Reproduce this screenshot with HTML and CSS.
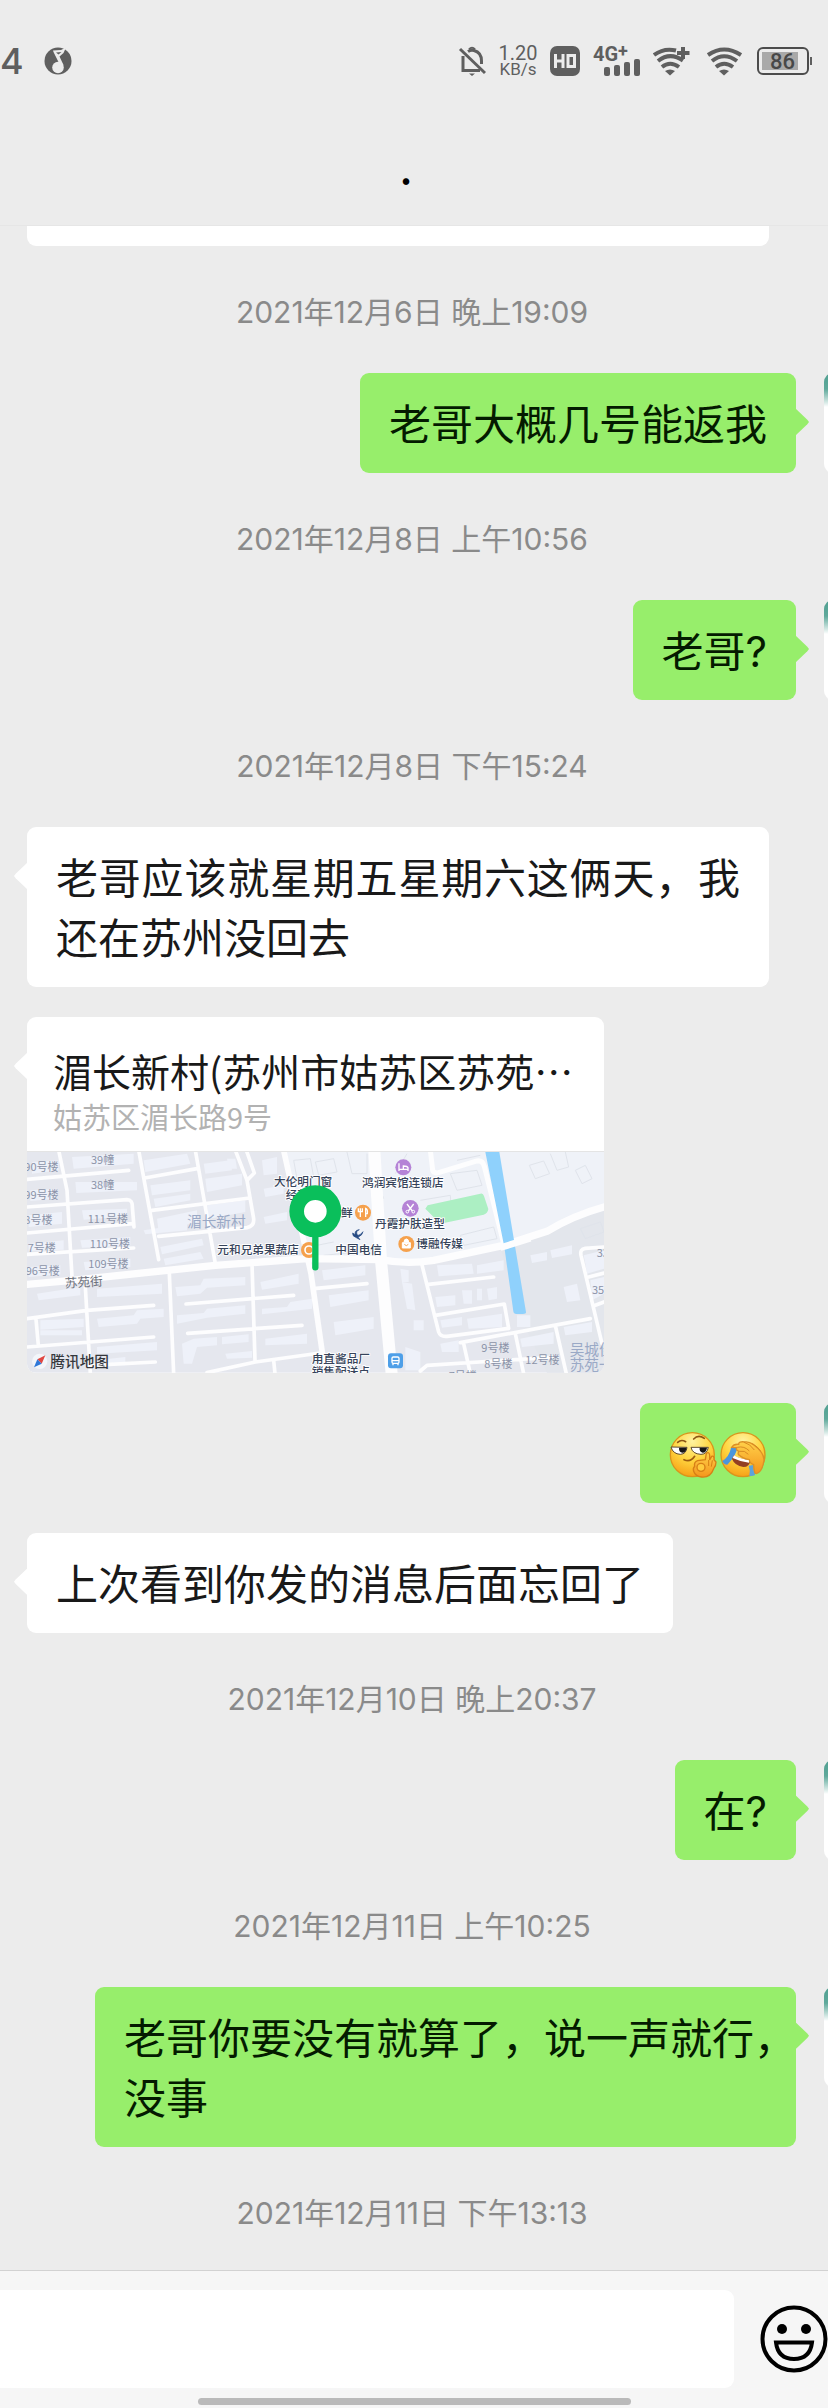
FILE: index.html
```html
<!DOCTYPE html>
<html lang="zh-CN">
<head>
    <meta charset="UTF-8">
    <meta name="viewport" content="width=device-width, initial-scale=1.0">
    <title>聊天</title>
    <link rel="stylesheet" href="styles.css">
</head>
<body>
    <header class="top">
        <div class="status">
            <span class="clock">4</span>
            <svg class="music" width="28" height="28" viewBox="0 0 28 28">
                <circle cx="14" cy="14" r="13.500" fill="#5f5f5f"/>
                <circle cx="14" cy="20.500" r="5.800" fill="#ececec"/>
                <path d="M9 3.500L17 3L22 0.500L19.500 6L15.500 9.500L19.500 18L17 20L9.500 5Z" fill="#ececec"/>
                <path d="M12 5.500L17.500 5L14.500 7.500Z" fill="#5f5f5f"/>
            </svg>
            <div class="indicators">
                <svg width="28" height="30" viewBox="0 0 28 30" fill="none" stroke="#5f5f5f" stroke-width="3">
                    <path d="M2 3L27 27"/>
                    <path d="M5 10V24.500H22"/>
                    <path d="M10 5.500Q13 3.500 16 4.500Q23.500 6.500 23.500 15V18"/>
                    <path d="M11 3.500Q14 0 17 3.500" stroke-width="2"/>
                    <path d="M11 27.500H17L14 30Z" fill="#5f5f5f" stroke="none"/>
                </svg>
                <span class="speed"><span class="speed-value">1.20</span><span class="speed-unit">KB/s</span></span>
                <svg width="30" height="30" viewBox="0 0 30 30">
                    <rect width="30" height="30" rx="7" fill="#5f5f5f"/>
                    <path d="M5.500 8V22M13 8V22M5.500 15H13" fill="none" stroke="#ececec" stroke-width="3"/>
                    <path d="M18 9.500H24.500V20.500H18Z" fill="none" stroke="#ececec" stroke-width="3"/>
                </svg>
                <span class="signal">
                    <span class="network">4G<sup>+</sup></span>
                    <svg width="36" height="17" viewBox="0 0 36 17" fill="#5f5f5f">
                        <rect x="0" y="8" width="6" height="9" rx="2"/>
                        <rect x="10" y="6" width="6" height="11" rx="2"/>
                        <rect x="20" y="3" width="6" height="14" rx="2"/>
                        <rect x="30" y="0" width="6" height="17" rx="2"/>
                    </svg>
                </span>
                <svg width="40" height="30" viewBox="0 0 40 30" fill="none" stroke="#5f5f5f" stroke-width="4">
                    <path d="M1 9Q11 1.500 23 4.500"/>
                    <path d="M5 15Q17 5.500 30 14.500"/>
                    <path d="M9 21Q17 14.500 26 21"/>
                    <path d="M12 25Q17 22 22 25L17 29.500Z" fill="#5f5f5f" stroke="none"/>
                    <path d="M30 1V13M24 7H36.500"/>
                </svg>
                <svg width="38" height="30" viewBox="0 0 38 30" fill="none" stroke="#5f5f5f" stroke-width="4">
                    <path d="M2 9Q18 -2 35 9"/>
                    <path d="M6 15Q18 5.500 31 15"/>
                    <path d="M10 21Q18 14.500 27 21"/>
                    <path d="M13 25Q18 22 23 25L18 29.500Z" fill="#5f5f5f" stroke="none"/>
                </svg>
                <span class="battery"><span class="battery-level">86</span></span>
            </div>
        </div>
        <h1 class="title">.</h1>
    </header>

    <main class="chat">
        <div class="row"><div class="bubble cut"></div></div>

        <time class="stamp">2021年12月6日 晚上19:09</time>
        <div class="row me">
            <p class="bubble">老哥大概几号能返我</p>
            <span class="avatar"></span>
        </div>

        <time class="stamp">2021年12月8日 上午10:56</time>
        <div class="row me">
            <p class="bubble">老哥?</p>
            <span class="avatar"></span>
        </div>

        <time class="stamp">2021年12月8日 下午15:24</time>
        <div class="row">
            <p class="bubble">老哥应该就星期五星期六这俩天，我还在苏州没回去</p>
        </div>

        <div class="row">
            <a class="bubble place" href="#">
                <span class="place-name">湄长新村(苏州市姑苏区苏苑…</span>
                <span class="place-address">姑苏区湄长路9号</span>
                <svg class="map" viewBox="80 65 1731 662">
                    <rect x="80" y="65" width="1731" height="662" fill="#e5e7ee"/>
                    <path d="M850 65H1811V230L1510 345L1240 395L1140 390L920 385Z" fill="#eff2f8"/>
                    <path d="M1500 350L1811 240V727H1640L1560 560Z" fill="#e3e6ec"/>

                    <!-- buildings -->
                    <g fill="#eef1f9">
                        <path d="M215 80L400 70V100L220 115ZM225 155L410 155V180L228 188ZM245 240L380 235V258L250 268ZM240 330L390 320V345L245 352ZM250 395L390 385V410L255 420Z"/>
                        <path d="M95 95L175 90V120L95 130ZM90 180L170 175V205L90 212ZM85 255L185 245V280L85 290ZM85 340L190 330V358L85 362ZM85 410L180 405V432L85 440Z"/>
                        <path d="M430 90L560 70L570 100L435 125ZM450 165L570 150V180L455 195ZM460 205L570 190V210L465 230ZM470 265L590 240V275L475 305ZM480 350L605 325L610 345L485 372ZM490 385L600 365L610 385L495 405Z"/>
                        <path d="M610 100L690 90L695 120L615 130ZM615 145L725 130V165L620 185ZM620 225L735 210V245L625 265ZM680 85H705L710 115H685ZM785 90L830 80V130L790 135ZM790 175L850 165V190L795 200ZM790 260L860 245V270L795 280ZM430 300L560 280V300L435 312Z"/>
                        <path d="M110 490L240 470V495L115 510ZM290 475L485 460V490L290 500ZM120 570L250 565V590L120 598ZM290 565L400 555L410 540L490 535V560L420 565L410 580L295 590ZM120 600H245V615H120ZM290 650L470 635V660L290 670ZM290 690L375 680V705H290Z"/>
                        <path d="M525 470L600 465L610 445L735 440V465L620 472L600 490L530 498ZM530 555L610 548L620 535L735 525V550L620 562L530 580ZM545 640L580 625L650 620V645L590 650L575 700H550ZM665 620L745 612V635L665 642ZM675 670L755 662V682L680 685Z"/>
                        <path d="M780 455L895 430V460L785 478ZM785 535L860 530L870 515L935 505V535L785 552ZM795 625L920 610V640L795 645ZM965 420L1095 405V435L970 450ZM985 495L1105 480V510L990 530ZM1000 575L1120 560V595L1005 615Z"/>
                        <path d="M1310 405L1415 400L1420 430L1315 438ZM1430 405L1510 390V420L1430 430ZM1305 500L1365 495V525L1310 530ZM1385 480H1415V520H1390ZM1430 475H1445V510H1430ZM1460 475L1490 470V505L1465 510ZM1320 570L1385 560V585L1325 592ZM1400 565L1505 550V590L1405 595ZM1320 640L1375 630V665H1325Z"/>
                        <path d="M1590 375L1640 365V390L1595 398ZM1650 360L1715 345V372L1655 383ZM1690 470L1730 460L1740 510L1700 515ZM1750 375L1811 360V390L1755 400ZM1755 400L1811 385V415L1760 430ZM1770 450L1811 440V490L1775 510ZM1560 625L1660 605V640L1565 650ZM1690 590L1775 575V605L1695 615ZM1550 555H1590V590H1550Z"/>
                        <path d="M1200 415L1225 420V455H1205ZM1205 455L1235 460L1245 540L1220 535ZM1240 570H1270V600H1240ZM1215 650L1260 665V720H1215Z"/>
                    </g>
                    <g fill="none" stroke="#dfe3ea" stroke-width="3">
                        <path d="M880 90L930 85L940 140L890 145ZM945 95L1000 85L1010 125L955 135ZM1040 65L1055 130H1100V70M1130 150L1150 205M1185 130L1220 70M1350 130L1430 120L1445 165L1370 180ZM1370 90L1440 75M1260 210L1350 195L1355 265M1380 315L1480 290L1490 325L1390 345ZM950 345L1000 335M970 375L1120 360"/>
                        <path d="M1587 105L1630 92L1648 130L1605 145ZM1650 70L1670 120L1705 110L1695 65M1725 120L1755 105L1775 145L1745 160ZM1740 295L1800 275L1811 305L1755 325Z"/>
                    </g>

                    <path d="M1275 235L1282 225L1440 190Q1448 187 1451 197L1464 236Q1463 248 1450 253L1320 280Z" fill="#acefc3"/>

                    <!-- streets -->
                    <g fill="none" stroke="#fdfdfe" stroke-width="11" stroke-linecap="round" stroke-linejoin="round">
                        <path d="M175 60L200 180L215 440M415 60L475 388M585 60L645 400M705 60L740 150L760 265Q762 288 740 292L475 318M738 60L762 128L740 150"/>
                        <path d="M80 147L385 120M80 230L380 208Q397 208 396 230L401 290M80 308L398 280M80 372L400 353M433 143L590 115M455 240L748 203"/>
                        <path d="M80 565L260 540L460 525M255 470L270 730M107 567L114 645M80 650L460 620M507 430L520 730M755 400L764 690M557 521L880 495M562 609L905 585M270 705L465 695M820 690L824 730"/>
                        <path d="M620 727L765 695L960 668M940 475L1100 460M1264 400L1315 605Q1320 620 1340 618L1525 594L1512 521L1305 555M1285 462L1480 440"/>
                        <path d="M1380 637L1770 565M1390 640L1410 730M1545 610L1570 730M1666 590L1698 730M1260 722L1280 705L1670 680M1811 350L1755 354Q1738 356 1742 375L1805 640M1765 440L1811 428M1785 525L1811 515"/>
                        <path d="M1290 60L1297 120Q1300 130 1315 127L1425 93Q1446 87 1452 108L1510 340" stroke-width="15"/>
                        <path d="M850 60L932 430L975 730" stroke-width="17"/>
                        <path d="M80 462L215 450L645 405L920 385L1140 388Q1220 403 1300 390L1510 345L1640 303Q1720 255 1811 230" stroke-width="22"/>
                        <path d="M1122 60L1142 390L1174 730" stroke-width="36"/>
                    </g>
                    <path d="M1455 65H1497L1577 545Q1578 551 1568 551H1548Q1540 551 1539 543L1512 350Z" fill="#8fd1fc"/>
                    <path d="M1500 352L1590 324" stroke="#fdfdfe" stroke-width="20"/>

                    <g class="label-house">
                        <text x="272" y="101">39幢</text>
                        <text x="272" y="176">38幢</text>
                        <text x="262" y="277">111号楼</text>
                        <text x="268" y="352">110号楼</text>
                        <text x="264" y="413">109号楼</text>
                        <text x="72" y="121">90号楼</text>
                        <text x="72" y="207">99号楼</text>
                        <text x="72" y="282">8号楼</text>
                        <text x="82" y="365">7号楼</text>
                        <text x="76" y="434">96号楼</text>
                        <text x="1443" y="664">9号楼</text>
                        <text x="1452" y="713">8号楼</text>
                        <text x="1575" y="701">12号楼</text>
                        <text x="1345" y="748">7号楼</text>
                        <text x="1789" y="379">33</text>
                        <text x="1775" y="490">35</text>
                    </g>
                    <text class="label-area" x="560" y="289">湄长新村</text>
                    <text class="label-area" x="1708" y="673">吴城佳</text>
                    <text class="label-area" x="1708" y="720">苏苑一</text>
                    <text class="label-road" x="194" y="472" transform="rotate(-3 194 472)">苏苑街</text>
                    <g class="label-shop">
                        <text x="821" y="166">大伦明门窗</text>
                        <text x="856" y="207">经营部</text>
                        <text x="651" y="371">元和兄弟果蔬店</text>
                        <text x="1085" y="171">鸿润宾馆连锁店</text>
                        <text x="1022" y="260">鲜</text>
                        <text x="1124" y="294">丹霞护肤造型</text>
                        <text x="1005" y="371">中国电信</text>
                        <text x="1248" y="354">博融传媒</text>
                        <text x="934" y="698">甪直酱品厂</text>
                        <text x="934" y="737">销售配送点</text>
                    </g>

                    <!-- points of interest -->
                    <circle cx="1209" cy="111" r="24" fill="#b583d6"/>
                    <path d="M1196 99V122M1196 117H1223M1223 122V112Q1221 107 1209 107V115" fill="none" stroke="#fff" stroke-width="4"/>
                    <circle cx="1230" cy="234" r="25" fill="#b583d6"/>
                    <path d="M1220 221L1236 242M1240 221L1224 242" stroke="#fff" stroke-width="4"/>
                    <circle cx="1221" cy="244" r="4" fill="none" stroke="#fff" stroke-width="3"/>
                    <circle cx="1239" cy="244" r="4" fill="none" stroke="#fff" stroke-width="3"/>
                    <circle cx="1088" cy="247" r="24" fill="#f5a14d"/>
                    <path d="M1080 234V260M1074 234V244H1086V234M1096 260V234Q1103 236 1101 250H1096" fill="none" stroke="#fff" stroke-width="4"/>
                    <circle cx="1218" cy="341" r="24" fill="#f5a14d"/>
                    <path d="M1206 337H1230V353H1206ZM1211 336Q1211 326 1218 326Q1225 326 1225 336" fill="#fff" stroke="#fff" stroke-width="3"/>
                    <path d="M1212 342Q1218 350 1224 342" fill="none" stroke="#f5a14d" stroke-width="3"/>
                    <circle cx="926" cy="359" r="24" fill="#f5a14d"/>
                    <circle cx="926" cy="359" r="12" fill="none" stroke="#fff" stroke-width="5"/>
                    <path d="M1057 308Q1074 324 1088 304Q1086 316 1073 320L1079 328L1066 321Q1056 318 1057 308ZM1077 298Q1063 302 1073 318L1067 319Q1058 300 1077 298Z" fill="#254a84" stroke="#254a84" stroke-width="2"/>
                    <rect x="1163" y="669" width="45" height="45" rx="9" fill="#4e9fe8"/>
                    <rect x="1175" y="680" width="21" height="19" rx="4" fill="none" stroke="#fff" stroke-width="4"/>
                    <path d="M1175 691H1196M1178 705V699M1193 705V699" stroke="#fff" stroke-width="4"/>

                    <!-- pin -->
                    <path d="M945 310V411" stroke="#0abf5b" stroke-width="19" stroke-linecap="round"/>
                    <circle cx="945" cy="243" r="56" fill="#fff" stroke="#0abf5b" stroke-width="44"/>

                    <!-- map brand -->
                    <circle cx="118" cy="693" r="23" fill="#f3f6fa"/>
                    <path d="M135 675L124 700L111 687Z" fill="#e04743"/>
                    <path d="M101 711L111 687L124 700Z" fill="#2f78d8"/>
                    <text class="label-brand" x="150" y="710">腾讯地图</text>
                </svg>
            </a>
        </div>

        <div class="row me">
            <p class="bubble faces">
                <svg width="48" height="48" viewBox="0 0 144 144" role="img" aria-label="得意">
                    <defs>
                        <radialGradient id="skin" cx=".5" cy=".2" r=".85">
                            <stop offset="0" stop-color="#fff3a0"/>
                            <stop offset=".5" stop-color="#ffd53f"/>
                            <stop offset="1" stop-color="#f59a12"/>
                        </radialGradient>
                        <linearGradient id="hand" x1="0" y1="0" x2="0" y2="1">
                            <stop offset="0" stop-color="#ffd049"/>
                            <stop offset="1" stop-color="#f4951c"/>
                        </linearGradient>
                    </defs>
                    <circle cx="70" cy="71" r="66" fill="url(#skin)" stroke="#d9941c" stroke-width="4"/>
                    <path d="M26 34Q37 24 50 32M74 24Q88 9 106 22" fill="none" stroke="#8a5514" stroke-width="5" stroke-linecap="round"/>
                    <path d="M6 48L54 49Q52 69 34 70Q12 69 6 48ZM66 49H118Q114 70 96 70Q70 69 66 49Z" fill="#fff" stroke="#5d4a30" stroke-width="3"/>
                    <path d="M30 50H53Q51 65 40 65Q29 63 30 50ZM92 50H114Q112 65 101 65Q90 62 92 50Z" fill="#161616"/>
                    <path d="M45 86Q64 95 77 76" fill="none" stroke="#9c5b10" stroke-width="5" stroke-linecap="round"/>
                    <path d="M77 106Q74 93 86 89L109 86L112 67Q120 61 122 72V87L128 76Q136 73 135 86L141 93Q141 105 134 113Q124 141 97 138Q79 136 74 121Q71 112 77 106Z" fill="url(#hand)" stroke="#d77f16" stroke-width="4"/>
                    <circle cx="96" cy="109" r="12" fill="#ffcb3e" stroke="#d77f16" stroke-width="4"/>
                    <path d="M119 87V105M130 88L127 107" stroke="#d77f16" stroke-width="3"/>
                </svg>
                <svg width="48" height="48" viewBox="0 0 144 144" role="img" aria-label="捂脸">
                    <circle cx="72" cy="71" r="66" fill="url(#skin)" stroke="#d9941c" stroke-width="4"/>
                    <path d="M36 51L57 43Q54 71 25 101Q14 101 10 90Q30 78 36 51Z" fill="#4b96dc"/>
                    <path d="M89 104L104 102Q102 120 109 132Q98 137 91 134Q95 119 89 104Z" fill="#5da3dc"/>
                    <path d="M44 73Q68 87 95 86Q92 108 73 108Q47 104 39 84Z" fill="#933f23"/>
                    <path d="M45 73Q68 86 93 87L90 95Q63 92 41 81Z" fill="#fff"/>
                    <path d="M38 49Q45 38 59 40Q58 30 78 33Q89 31 104 41Q134 63 135 87Q131 122 112 128Q105 128 104 101Q91 96 91 86Q70 82 61 73Q54 69 60 61Q50 58 53 50Z" fill="url(#hand)" stroke="#dc9026" stroke-width="4"/>
                    <path d="M55 49Q76 44 91 60M62 61Q77 57 88 70M75 34Q93 38 106 57M99 38Q117 47 124 59" fill="none" stroke="#d88a23" stroke-width="3"/>
                </svg>
            </p>
            <span class="avatar"></span>
        </div>

        <div class="row">
            <p class="bubble">上次看到你发的消息后面忘回了</p>
        </div>

        <time class="stamp">2021年12月10日 晚上20:37</time>
        <div class="row me">
            <p class="bubble">在?</p>
            <span class="avatar"></span>
        </div>

        <time class="stamp">2021年12月11日 上午10:25</time>
        <div class="row me">
            <p class="bubble hanging">老哥你要没有就算了，说一声就行，<br>没事</p>
            <span class="avatar"></span>
        </div>

        <time class="stamp">2021年12月11日 下午13:13</time>
    </main>

    <footer class="composer">
        <div class="composer-row">
            <input class="message" type="text" aria-label="消息">
            <button class="emoji" type="button" aria-label="表情">
                <svg width="68" height="68" viewBox="0 0 68 68">
                    <circle cx="34" cy="34" r="31.500" fill="none" stroke="#000" stroke-width="4"/>
                    <circle cx="22" cy="24" r="5" fill="#000"/>
                    <circle cx="46" cy="24" r="5" fill="#000"/>
                    <path d="M16 37.500H52Q50 54 34 54Q18 54 16 37.500Z" fill="none" stroke="#000" stroke-width="4"/>
                </svg>
            </button>
        </div>
        <div class="home-bar"></div>
    </footer>
</body>
</html>
```
FILE: styles.css
```css
* { box-sizing: border-box; }
body { margin: 0; min-height: 100vh; display: flex; flex-direction: column; overflow-x: hidden; background: #ececec; color: #191919; font-family: "Noto Sans CJK SC", sans-serif; }

.top { height: 226px; border-bottom: 1px solid #e6e6e6; }
.status { display: flex; align-items: center; height: 122px; padding-right: 17px; color: #5f5f5f; }
.clock { font: 500 36px/40px Inter, sans-serif; }
.music { margin-left: 20px; }
.indicators { display: flex; align-items: center; gap: 13px; margin-left: auto; }
.speed { display: flex; flex-direction: column; align-items: center; width: 38px; font-family: Roboto, sans-serif; }
.speed-value { font-size: 20px; line-height: 16px; }
.speed-unit { font-size: 17px; line-height: 16px; }
.signal { display: flex; flex-direction: column; width: 47px; height: 30px; position: relative; }
.signal svg { position: absolute; right: 0; bottom: 0; }
.network { font: 700 20px/16px Roboto, sans-serif; white-space: nowrap; }
.network sup { font-size: 18px; line-height: 8px; vertical-align: 4px; }
.battery { position: relative; width: 52px; height: 28px; margin-right: 2px; padding: 3px; border: 2px solid #4c4c4c; border-radius: 6px; }
.battery::after { content: ""; position: absolute; right: -5px; top: 8px; width: 2px; height: 8px; background: #5f5f5f; }
.battery-level { display: block; width: 36px; height: 18px; padding-left: 8px; background: #a9a9a9; color: #484848; font: 500 22px/19px Roboto, sans-serif; }
.title { margin: 0; padding-right: 16px; text-align: center; font-size: 42px; font-weight: 500; line-height: 88px; color: #000; }

.chat { flex: 1; display: flex; flex-direction: column; gap: 30px; padding-bottom: 26px; overflow: hidden; }
.stamp { height: 67px; padding: 5px 4px 0 0; text-align: center; font-family: Inter, "Noto Sans CJK SC", sans-serif; font-size: 30px; line-height: 62px; color: #8a8a8a; }
.row { display: flex; padding-left: 27px; }
.me { justify-content: flex-end; gap: 28px; }

.bubble { position: relative; max-width: 742px; margin: 0; padding: 22px 29px 18px; border-radius: 9px; background: #fff; font-family: Inter, "Noto Sans CJK SC", sans-serif; font-size: 42px; line-height: 60px; text-align: justify; }
.bubble::before { content: ""; position: absolute; top: 35px; left: -13px; width: 14px; height: 28px; background: inherit; clip-path: polygon(100% 0, 12% 42%, 0 50%, 12% 58%, 100% 100%); }
.me .bubble { background: #97ee6b; color: #041b00; }
.me .bubble::before { left: auto; right: -13px; clip-path: polygon(0 0, 88% 42%, 100% 50%, 88% 58%, 0 100%); }
.cut { width: 742px; height: 20px; padding: 0; border-radius: 0 0 9px 9px; }
.cut::before { display: none; }
/* the closing comma hangs into the padding */
.hanging { max-width: 701px; white-space: nowrap; }
.faces { display: flex; align-items: center; gap: 2px; height: 100px; }
.avatar { flex: none; width: 100px; height: 100px; margin-right: -96px; border-radius: 9px; background: linear-gradient(#4f9f90, #5fa99b 16px, #fff 34px); }

.place { display: block; width: 577px; padding: 23px 0 0; color: #191919; font-family: "Noto Sans CJK SC", sans-serif; text-decoration: none; }
.place-name, .place-address { display: block; padding: 0 26px; white-space: nowrap; }
.place-name { font-size: 39px; line-height: 60px; }
.place-address { font-size: 29px; line-height: 32px; color: #b2b2b2; }
.map { display: block; width: 100%; margin-top: 19px; border-top: 1px solid #e4e4e4; border-radius: 0 0 9px 9px; }
.label-house { font-size: 33px; fill: #8b93a8; }
.label-area { font-size: 44px; fill: #9aa9c6; }
.label-road { font-size: 38px; fill: #6e727c; }
.label-shop { font-size: 35px; font-weight: 500; fill: #36435a; stroke: #fff; stroke-width: 5px; paint-order: stroke; }
.label-brand { font-size: 44px; font-weight: 500; fill: #35383d; }

.composer { border-top: 1px solid #d2d2d2; background: #f6f6f6; }
.composer-row { display: flex; align-items: center; gap: 26px; padding-top: 19px; }
.message { flex: 1; min-width: 0; height: 98px; padding: 0 24px; border: 0; border-radius: 0 9px 9px 0; background: #fff; font: inherit; font-size: 42px; }
.emoji { width: 68px; height: 68px; padding: 0; border: 0; background: none; }
.emoji svg { display: block; }
.home-bar { width: 433px; height: 7px; margin: 10px auto 3px; border-radius: 4px; background: #bababa; }
```
